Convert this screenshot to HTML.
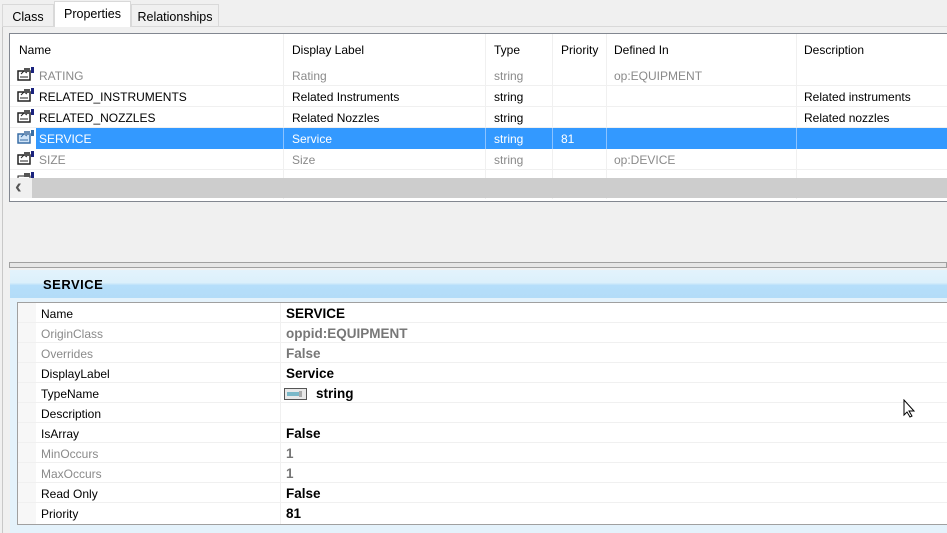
<!DOCTYPE html>
<html><head><meta charset="utf-8"><style>
*{margin:0;padding:0;box-sizing:border-box}
body{width:947px;height:533px;background:#f0f0f0;font-family:"Liberation Sans",sans-serif;font-size:12px;color:#000;position:relative;overflow:hidden}
.a{position:absolute;white-space:nowrap}
.tab{position:absolute;top:4px;height:22px;border:1px solid #d9d9d9;border-bottom:none;background:#f0f0f0;padding:5px 0 0 0;text-align:center;font-size:12.5px}
.sel{top:1px;height:26px;background:#fff;border-color:#d9d9d9;padding-top:5px;z-index:2}
.list{position:absolute;left:9px;top:33px;width:945px;height:169px;background:#fff;border:1px solid #828790;overflow:hidden}
.row{position:absolute;left:0;width:940px;height:21px;border-bottom:1px solid #f0f0f0}
.c{position:absolute;top:4px;white-space:nowrap}
.g{color:#8a8a8a}
.vs{position:absolute;top:0;width:1px;background:#f0f0f0;height:145px}
.hs{position:absolute;left:0;top:144px;width:940px;height:20px;background:#cdcdcd}
.pr{position:absolute;left:0;width:930px;height:20px;border-bottom:1px solid #f0f0f0}
.pl{position:absolute;left:23px;top:4px}
.pv{position:absolute;left:268px;top:3px;font-weight:bold;font-size:13.5px}
</style></head><body>
<div class="a" style="left:2px;top:26px;width:1px;height:507px;background:#c8c8c8"></div>
<div class="a" style="left:2px;top:26px;width:945px;height:1px;background:#d9d9d9"></div>
<div class="tab" style="left:2px;width:52px">Class</div>
<div class="tab sel" style="left:54px;width:77px">Properties</div>
<div class="tab" style="left:131px;width:88px">Relationships</div>

<div class="list">
 <div class="a" style="left:9px;top:9px">Name</div>
 <div class="a" style="left:282px;top:9px">Display Label</div>
 <div class="a" style="left:484px;top:9px">Type</div>
 <div class="a" style="left:551px;top:9px">Priority</div>
 <div class="a" style="left:604px;top:9px">Defined In</div>
 <div class="a" style="left:794px;top:9px">Description</div>
 <div class="vs" style="left:273px;height:165px"></div>
 <div class="vs" style="left:475px;height:165px"></div>
 <div class="vs" style="left:542px;height:165px"></div>
 <div class="vs" style="left:596px;height:165px"></div>
 <div class="vs" style="left:786px;height:165px"></div>
 <div class="row g" style="top:31px"><svg class="a" style="left:7px;top:2px" width="18" height="14"><rect x="1" y="4" width="12" height="9" fill="#fff" stroke="#222" stroke-width="1.5"/><path d="M3 10h8M4 7l3-3 3 2" stroke="#222" fill="none"/><rect x="7" y="1" width="6" height="4" fill="#555"/><rect x="14" y="0" width="3" height="6" fill="#1a237e"/></svg><span class="c" style="left:29px">RATING</span><span class="c" style="left:282px">Rating</span><span class="c" style="left:484px">string</span><span class="c" style="left:604px">op:EQUIPMENT</span></div>
 <div class="row" style="top:52px"><svg class="a" style="left:7px;top:2px" width="18" height="14"><rect x="1" y="4" width="12" height="9" fill="#fff" stroke="#222" stroke-width="1.5"/><path d="M3 10h8M4 7l3-3 3 2" stroke="#222" fill="none"/><rect x="7" y="1" width="6" height="4" fill="#555"/><rect x="14" y="0" width="3" height="6" fill="#1a237e"/></svg><span class="c" style="left:29px">RELATED_INSTRUMENTS</span><span class="c" style="left:282px">Related Instruments</span><span class="c" style="left:484px">string</span><span class="c" style="left:794px">Related instruments</span></div>
 <div class="row" style="top:73px"><svg class="a" style="left:7px;top:2px" width="18" height="14"><rect x="1" y="4" width="12" height="9" fill="#fff" stroke="#222" stroke-width="1.5"/><path d="M3 10h8M4 7l3-3 3 2" stroke="#222" fill="none"/><rect x="7" y="1" width="6" height="4" fill="#555"/><rect x="14" y="0" width="3" height="6" fill="#1a237e"/></svg><span class="c" style="left:29px">RELATED_NOZZLES</span><span class="c" style="left:282px">Related Nozzles</span><span class="c" style="left:484px">string</span><span class="c" style="left:794px">Related nozzles</span></div>
 <div class="row" style="top:94px;color:#fff;border:none"><div class="a" style="left:26px;top:0;width:920px;height:21px;background:#3399ff"></div><svg class="a" style="left:7px;top:2px" width="18" height="14"><rect x="1" y="4" width="12" height="9" fill="#cfe3f7" stroke="#3a6ea5" stroke-width="1.5"/><path d="M3 10h8M4 7l3-3 3 2" stroke="#3a6ea5" fill="none"/><rect x="7" y="1" width="6" height="4" fill="#6d8fb5"/><rect x="14" y="0" width="3" height="6" fill="#3a6ea5"/></svg><span class="c" style="left:29px">SERVICE</span><span class="c" style="left:282px">Service</span><span class="c" style="left:484px">string</span><span class="c" style="left:551px">81</span>
 <div class="a" style="left:273px;top:0;width:1px;height:21px;background:#8cc3ff"></div><div class="a" style="left:475px;top:0;width:1px;height:21px;background:#8cc3ff"></div><div class="a" style="left:542px;top:0;width:1px;height:21px;background:#8cc3ff"></div><div class="a" style="left:596px;top:0;width:1px;height:21px;background:#8cc3ff"></div><div class="a" style="left:786px;top:0;width:1px;height:21px;background:#8cc3ff"></div></div>
 <div class="row g" style="top:115px"><svg class="a" style="left:7px;top:2px" width="18" height="14"><rect x="1" y="4" width="12" height="9" fill="#fff" stroke="#222" stroke-width="1.5"/><path d="M3 10h8M4 7l3-3 3 2" stroke="#222" fill="none"/><rect x="7" y="1" width="6" height="4" fill="#555"/><rect x="14" y="0" width="3" height="6" fill="#1a237e"/></svg><span class="c" style="left:29px">SIZE</span><span class="c" style="left:282px">Size</span><span class="c" style="left:484px">string</span><span class="c" style="left:604px">op:DEVICE</span></div>
 <div class="row" style="top:136px"><svg class="a" style="left:7px;top:2px" width="18" height="14"><rect x="1" y="4" width="12" height="9" fill="#fff" stroke="#222"/><rect x="7" y="1" width="6" height="4" fill="#555"/><rect x="14" y="0" width="3" height="6" fill="#1a237e"/></svg></div>
 <div class="hs"><div class="a" style="left:0;top:0;width:22px;height:20px;background:#f0f0f0;font-size:20px;font-weight:bold;color:#555;padding:0 0 0 5px;line-height:18px">&lsaquo;</div></div>
</div>

<div class="a" style="left:9px;top:262px;width:938px;height:6px;background:#e6e6e6;border:1px solid #a0a0a0"></div>
<div class="a" style="left:10px;top:270px;width:937px;height:28px;background:linear-gradient(#e3f3fc 0%,#dcf0fb 45%,#b5defa 55%,#b3dcf8 100%)"></div>
<div class="a" style="left:43px;top:277px;font-weight:bold;font-size:13px;letter-spacing:0.5px">SERVICE</div>
<div class="a" style="left:10px;top:298px;width:937px;height:235px;background:#e4f2fb"></div>
<div class="a" style="left:17px;top:302px;width:930px;height:223px;background:#fff;border:1px solid #a0a0a0;border-right:none;overflow:hidden">
 <div class="a" style="left:0;top:0;width:18px;height:223px;background:#f7f7f7"></div>
 <div class="pr" style="top:0"><span class="pl">Name</span><span class="pv">SERVICE</span></div>
 <div class="pr g" style="top:20px"><span class="pl">OriginClass</span><span class="pv" style="color:#777">oppid:EQUIPMENT</span></div>
 <div class="pr g" style="top:40px"><span class="pl">Overrides</span><span class="pv" style="color:#777">False</span></div>
 <div class="pr" style="top:60px"><span class="pl">DisplayLabel</span><span class="pv">Service</span></div>
 <div class="pr" style="top:80px"><span class="pl">TypeName</span><svg class="a" style="left:266px;top:5px" width="23" height="12"><rect x="0.5" y="0.5" width="22" height="11" fill="#e8e8e8" stroke="#555"/><rect x="3" y="4" width="12" height="4" fill="#7ab8c8"/><rect x="15" y="3" width="3" height="6" fill="#aaa"/></svg><span class="pv" style="left:298px">string</span></div>
 <div class="pr" style="top:100px"><span class="pl">Description</span></div>
 <div class="pr" style="top:120px"><span class="pl">IsArray</span><span class="pv">False</span></div>
 <div class="pr g" style="top:140px"><span class="pl">MinOccurs</span><span class="pv" style="color:#777">1</span></div>
 <div class="pr g" style="top:160px"><span class="pl">MaxOccurs</span><span class="pv" style="color:#777">1</span></div>
 <div class="pr" style="top:180px"><span class="pl">Read Only</span><span class="pv">False</span></div>
 <div class="pr" style="top:200px;border:none"><span class="pl">Priority</span><span class="pv">81</span></div>
 <div class="a" style="left:262px;top:0;width:1px;height:223px;background:#f0f0f0"></div>
</div>
<svg class="a" style="left:903px;top:399px" width="14" height="20"><path d="M1 1v15l3-3 3 5 2-1-3-5h5z" fill="#fff" stroke="#000" stroke-width="1"/></svg>
</body></html>
